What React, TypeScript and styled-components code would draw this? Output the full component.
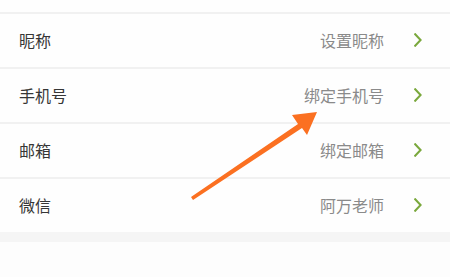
import styled, { createGlobalStyle } from "styled-components";

const GlobalStyle = createGlobalStyle`
  html, body {
    margin: 0;
    padding: 0;
    background: #fdfdfd;
    font-family: "Noto Sans CJK SC", "Noto Sans", sans-serif;
  }
`;

const Page = styled.div`
  position: relative;
  width: 450px;
  height: 277px;
  overflow: hidden;
  background: #fdfdfd;
`;

const TopFragment = styled.div`
  height: 12px;
  background: #fefefe;
`;

const Row = styled.div`
  display: flex;
  align-items: center;
  height: 53px;
  padding: 0 28px 0 19px;
  border-top: 2px solid #f1f1f1;
  background: #fefefe;
`;

const Label = styled.span`
  flex: 1;
  font-size: 16px;
  color: #363636;
  transform: translateY(-1px);
`;

const Value = styled.span`
  font-size: 16px;
  color: #8a8a8a;
  margin-right: 30px;
  transform: translateY(-1px);
`;

const Chevron = styled.svg`
  width: 8px;
  height: 14px;
  flex-shrink: 0;
  margin-top: -1px;
`;

const Band = styled.div`
  height: 10px;
  background: #f5f5f5;
`;

const Arrow = styled.svg`
  position: absolute;
  left: 0;
  top: 0;
  width: 450px;
  height: 277px;
  pointer-events: none;
`;

const rows = [
  { label: "昵称", value: "设置昵称" },
  { label: "手机号", value: "绑定手机号" },
  { label: "邮箱", value: "绑定邮箱" },
  { label: "微信", value: "阿万老师" },
];

export default function App() {
  return (
    <>
      <GlobalStyle />
      <Page>
        <TopFragment />
        {rows.map((r) => (
          <Row key={r.label}>
            <Label>{r.label}</Label>
            <Value>{r.value}</Value>
            <Chevron viewBox="0 0 8 14">
              <path
                d="M1.2 1.2 L6.6 7 L1.2 12.8"
                fill="none"
                stroke="#7aa83c"
                strokeWidth="2"
                strokeLinecap="square"
              />
            </Chevron>
          </Row>
        ))}
        <Band />
        <Arrow viewBox="0 0 450 277">
          <polygon
            points="191,197 298,124 292,115 317,112 307,135 302,128 193,200"
            fill="#fb7021"
          />
        </Arrow>
      </Page>
    </>
  );
}
